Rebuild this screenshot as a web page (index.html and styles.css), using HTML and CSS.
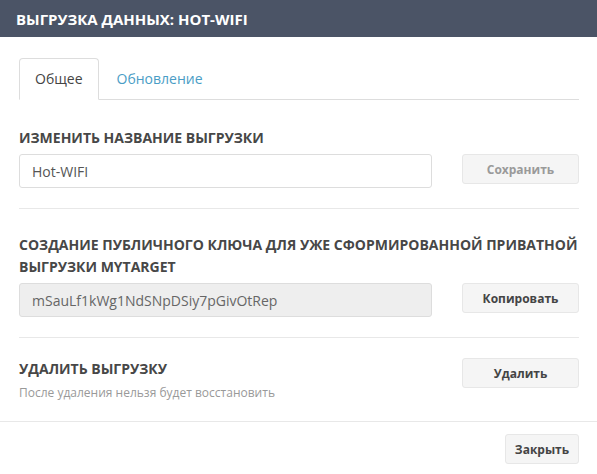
FILE: index.html
```html
<!DOCTYPE html>
<html lang="ru">
<head>
<meta charset="utf-8">
<title>Выгрузка данных</title>
<link rel="stylesheet" href="styles.css">
</head>
<body>
<div class="modal">
  <div class="modal-header">ВЫГРУЗКА ДАННЫХ: HOT-WIFI</div>
  <div class="modal-body">
    <ul class="tabs">
      <li class="tab active">Общее</li>
      <li class="tab">Обновление</li>
    </ul>
    <div class="section first">
      <div class="heading">ИЗМЕНИТЬ НАЗВАНИЕ ВЫГРУЗКИ</div>
      <div class="row">
        <input class="field" type="text" value="Hot-WIFI">
        <button class="btn disabled">Сохранить</button>
      </div>
    </div>
    <div class="section">
      <div class="heading">СОЗДАНИЕ ПУБЛИЧНОГО КЛЮЧА ДЛЯ УЖЕ СФОРМИРОВАННОЙ ПРИВАТНОЙ ВЫГРУЗКИ MYTARGET</div>
      <div class="row">
        <input class="field readonly" type="text" value="mSauLf1kWg1NdSNpDSiy7pGivOtRep" readonly>
        <button class="btn">Копировать</button>
      </div>
    </div>
    <div class="section last">
      <div class="row top">
        <div class="col">
          <div class="heading">УДАЛИТЬ ВЫГРУЗКУ</div>
          <div class="hint">После удаления нельзя будет восстановить</div>
        </div>
        <button class="btn">Удалить</button>
      </div>
    </div>
  </div>
  <div class="modal-footer">
    <button class="btn small">Закрыть</button>
  </div>
</div>
</body>
</html>
```
FILE: styles.css
```css
* { box-sizing: border-box; }
html, body { margin: 0; padding: 0; background: #fff; }
body { font-family: "Open Sans", "Noto Sans", sans-serif; color: #444; }
.modal { width: 597px; }
.modal-header {
  height: 37px;
  background: #4b5466;
  color: #fff;
  font-size: 15px;
  font-weight: 700;
  padding: 0 16px;
  display: flex;
  align-items: center;
}
.modal-body { padding: 21px 18px 0 19px; }
.tabs {
  list-style: none;
  margin: 0;
  padding: 0;
  display: flex;
  border-bottom: 1px solid #ddd;
  height: 42px;
}
.tab {
  height: 42px;
  line-height: 40px;
  padding: 0 15px;
  font-size: 14px;
  color: #4a9dc6;
  border: 1px solid transparent;
  border-radius: 4px 4px 0 0;
  margin-right: 2px;
}
.tab.active {
  color: #444;
  border-color: #ddd;
  border-bottom-color: #fff;
  background: #fff;
}
.section {
  padding: 25px 0 20px;
  border-bottom: 1px solid #e8e8e8;
}
.section.first { padding-top: 27px; }
.section.last { border-bottom: none; padding: 20px 0 19px; }
.heading {
  font-size: 14px;
  font-weight: 700;
  line-height: 22px;
  color: #474747;
  margin-bottom: 5px;
}
.row { display: flex; align-items: flex-start; gap: 30px; }
.col { flex: 1; }
.col .heading { margin-bottom: 0; }
.field {
  flex: 1;
  height: 34px;
  border: 1px solid #ddd;
  border-radius: 3px;
  padding: 0 12px;
  font-family: inherit;
  font-size: 14px;
  color: #555;
  background: #fff;
  outline: none;
}
.field.readonly { background: #eee; color: #666; }
.btn {
  width: 117px;
  height: 30px;
  border: 1px solid #e7e7e7;
  border-radius: 3px;
  background: #f5f5f5;
  font-family: inherit;
  font-size: 12px;
  font-weight: 700;
  color: #444;
  padding: 0;
}
.btn.disabled { color: #9a9a9a; }
.btn.small { width: 74px; }
.hint {
  margin-top: 4px;
  font-size: 12px;
  line-height: 18px;
  color: #999;
}
.modal-footer {
  border-top: 1px solid #e8e8e8;
  padding: 12px 18px 12px 19px;
  display: flex;
  justify-content: flex-end;
}
```
